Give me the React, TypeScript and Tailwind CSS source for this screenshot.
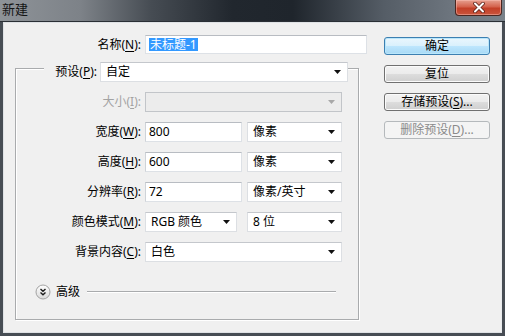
import React from "react";

function Arrow({ disabled }: { disabled?: boolean }) {
  return (
    <svg width="7" height="4" viewBox="0 0 7 4" className="shrink-0">
      <path d="M0 0H7L3.5 4Z" fill={disabled ? "#a8a8a8" : "#111"} />
    </svg>
  );
}

function Select({ w, text, disabled }: { w: string; text?: string; disabled?: boolean }) {
  return (
    <div
      className={`${w} h-[20px] shrink-0 flex items-center justify-between pl-[5px] pr-[6px] border ${
        disabled
          ? "bg-[#ececec] border-[#c2c5c9]"
          : "bg-white border-[#dcdfe3] border-t-[#c4c7cc]"
      }`}
    >
      <span className="leading-none whitespace-nowrap">{text}</span>
      <Arrow disabled={disabled} />
    </div>
  );
}

function Input({ w, text, h = "h-[20px]" }: { w: string; text: string; h?: string }) {
  return (
    <div
      className={`${w} ${h} shrink-0 flex items-center pl-[3px] bg-white border border-[#dde1e6] border-t-[#b8bcc2] border-l-[#cfd3d8]`}
    >
      <span className="leading-none">{text}</span>
    </div>
  );
}

function Label({ children, dim }: { children: React.ReactNode; dim?: boolean }) {
  return (
    <div className={`w-[125px] shrink-0 text-right leading-none whitespace-nowrap ${dim ? "text-[#a3a3a3]" : "text-black"}`}>
      {children}
    </div>
  );
}

function U({ children }: { children: React.ReactNode }) {
  return <span className="underline underline-offset-[2px]">{children}</span>;
}

function Btn({ children, kind }: { children: React.ReactNode; kind?: "default" | "disabled" }) {
  const cls =
    kind === "default"
      ? "border-[#3c7fb1] bg-[linear-gradient(180deg,#eaf6fd_0%,#d9f0fc_50%,#bee6fd_50%,#a7d9f5_100%)] shadow-[inset_0_0_0_1px_#b9e6fb] text-black"
      : kind === "disabled"
      ? "border-[#b5b9bc] bg-[#f4f4f4] text-[#8a8a8a]"
      : "border-[#707070] bg-[linear-gradient(180deg,#f2f2f2_0%,#ebebeb_50%,#dddddd_50%,#cfcfcf_100%)] shadow-[inset_0_0_0_1px_#fbfbfb] text-black";
  return (
    <div className={`w-[106px] h-[18px] rounded-[3px] border flex items-center justify-center leading-none whitespace-nowrap ${cls}`}>
      {children}
    </div>
  );
}

export default function App() {
  return (
    <div className="w-[505px] h-[336px] overflow-hidden flex flex-col bg-[#474d54] text-[12px] text-black font-['Noto_Sans','Noto_Sans_CJK_SC',sans-serif]">
      {/* title bar */}
      <div className="h-[22px] shrink-0 flex items-start justify-between border-b border-[#2a2f35] bg-[linear-gradient(90deg,#8e9398_0%,#7d8288_16%,#464c53_30%,#21272e_46%,#1f252c_58%,#555d66_76%,#6e767f_90%,#79828a_100%)]">
        <span className="pl-[2px] pt-[3px] text-[13px] leading-none text-[#141414]">新建</span>
        <div className="mr-[3px] w-[47px] h-[16px] rounded-b-[4px] border border-t-0 border-[#4a2620] flex items-center justify-center bg-[linear-gradient(180deg,#e6a090_0%,#d4624d_45%,#c33f28_55%,#c9553c_100%)] shadow-[inset_0_0_0_1px_rgba(255,200,190,0.45)]">
          <svg width="14" height="11" viewBox="0 0 14 11">
            <path d="M3 1.5L11 9.5M11 1.5L3 9.5" stroke="#5a2018" strokeWidth="3.6" strokeLinecap="round" />
            <path d="M3 1.5L11 9.5M11 1.5L3 9.5" stroke="#fff" strokeWidth="2" strokeLinecap="round" />
          </svg>
        </div>
      </div>

      {/* client */}
      <div className="mx-[3px] mb-[3px] flex-1 flex bg-[#f0f0f0] border border-[#dfe2e5] border-r-[#e8eaec]">
        {/* left form */}
        <div className="w-[380px] shrink-0 flex flex-col">
          <div className="mt-[12px] h-[19px] flex items-center gap-[4px]">
            <div className="w-[137px] shrink-0 text-right leading-none">
              名称(<U>N</U>):
            </div>
            <div className="w-[222px] h-[19px] shrink-0 flex items-center pl-[3px] bg-white border border-[#dde1e6] border-t-[#b8bcc2]">
              <span className="bg-[#3399ff] text-white leading-[13px] px-[1px]">未标题-1</span>
            </div>
          </div>

          {/* group box */}
          <div className="mt-[14px] ml-[11px] w-[344px] h-[252px] border border-[#a9abad] shadow-[inset_1px_1px_0_#ffffff,1px_1px_0_#ffffff] flex flex-col gap-[10px]">
            <div className="mt-[-7px] h-[20px] flex items-center">
              <div className="w-[28px] shrink-0" />
              <div className="w-[56px] h-[20px] shrink-0 bg-[#f0f0f0] flex items-center justify-end pr-[3px] leading-none whitespace-nowrap">
                预设(<U>P</U>):
              </div>
              <Select w="w-[248px]" text="自定" />
            </div>

            <div className="h-[20px] flex items-center gap-[4px]">
              <Label dim>
                大小(<U>I</U>):
              </Label>
              <Select w="w-[197px]" disabled />
            </div>

            <div className="h-[20px] flex items-center gap-[4px]">
              <Label>
                宽度(<U>W</U>):
              </Label>
              <Input w="w-[97px]" text="800" />
              <div className="ml-[1px]">
                <Select w="w-[95px]" text="像素" />
              </div>
            </div>

            <div className="h-[20px] flex items-center gap-[4px]">
              <Label>
                高度(<U>H</U>):
              </Label>
              <Input w="w-[97px]" text="600" />
              <div className="ml-[1px]">
                <Select w="w-[95px]" text="像素" />
              </div>
            </div>

            <div className="h-[20px] flex items-center gap-[4px]">
              <Label>
                分辨率(<U>R</U>):
              </Label>
              <Input w="w-[97px]" text="72" />
              <div className="ml-[1px]">
                <Select w="w-[95px]" text="像素/英寸" />
              </div>
            </div>

            <div className="h-[20px] flex items-center gap-[4px]">
              <Label>
                颜色模式(<U>M</U>):
              </Label>
              <Select w="w-[92px]" text="RGB 颜色" />
              <div className="ml-[6px]">
                <Select w="w-[95px]" text="8 位" />
              </div>
            </div>

            <div className="h-[20px] flex items-center gap-[4px]">
              <Label>
                背景内容(<U>C</U>):
              </Label>
              <Select w="w-[197px]" text="白色" />
            </div>

            <div className="mt-[12px] h-[16px] flex items-center pl-[19px] pr-[22px]">
              <svg width="16" height="16" viewBox="0 0 16 16" className="shrink-0">
                <defs>
                  <linearGradient id="adv" x1="0" y1="0" x2="0" y2="1">
                    <stop offset="0" stopColor="#ffffff" />
                    <stop offset="1" stopColor="#d9d9d9" />
                  </linearGradient>
                </defs>
                <circle cx="8" cy="8" r="7" fill="url(#adv)" stroke="#a3a3a3" />
                <path d="M5.5 5L8 7.3L10.5 5M5.5 8.4L8 10.7L10.5 8.4" fill="none" stroke="#1c1c1c" strokeWidth="1.4" />
              </svg>
              <span className="ml-[5px] leading-none whitespace-nowrap">高级</span>
              <div className="ml-[7px] flex-1 h-[2px] border-t border-[#a9abad] border-b border-b-white" />
            </div>
          </div>
        </div>

        {/* buttons */}
        <div className="mt-[14px] flex flex-col gap-[10px]">
          <Btn kind="default">确定</Btn>
          <Btn>复位</Btn>
          <Btn>
            存储预设(<U>S</U>)...
          </Btn>
          <Btn kind="disabled">
            删除预设(<U>D</U>)...
          </Btn>
        </div>
      </div>
    </div>
  );
}
